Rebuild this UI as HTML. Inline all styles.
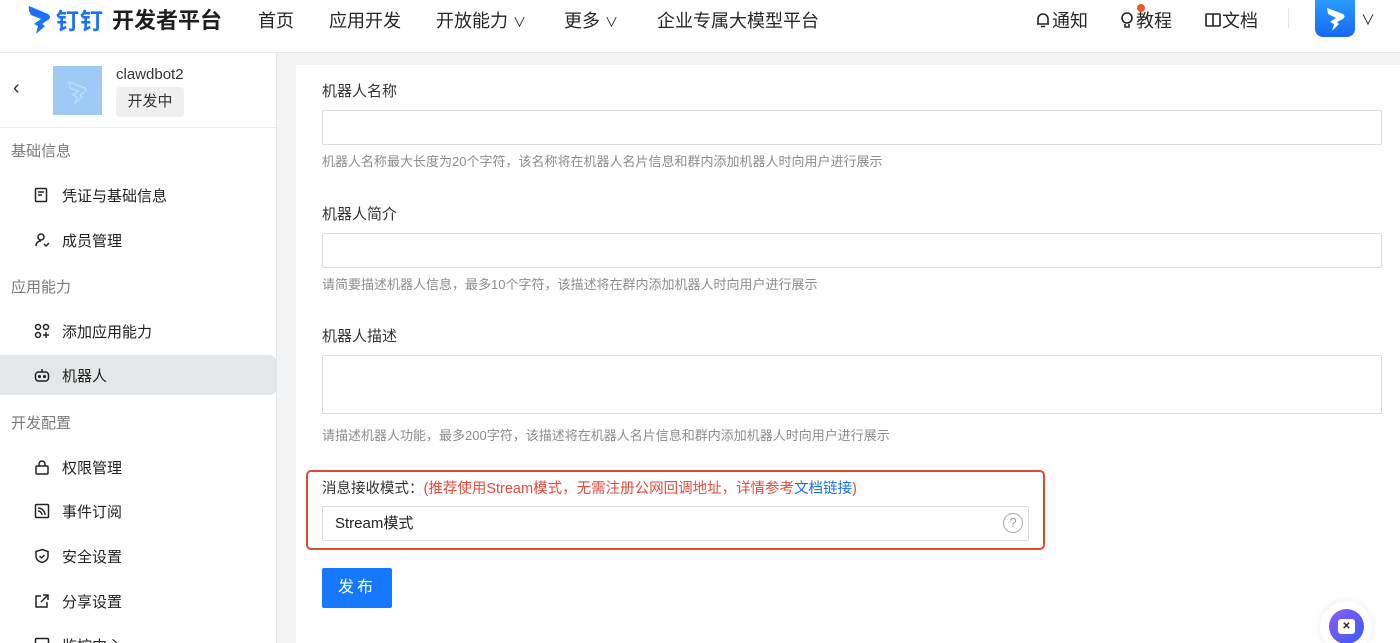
<!DOCTYPE html>
<html style="width:1400px;height:643px;overflow:hidden"><head><meta charset="utf-8">
<style>
*{box-sizing:border-box;margin:0;padding:0}
html,body{width:1400px;height:643px;overflow:hidden}
body{background:#f2f3f5;font-family:"Liberation Sans","Noto Sans CJK SC",sans-serif;color:#1f1f1f;position:relative}
.hdr{position:absolute;left:0;top:0;width:1400px;height:53px;background:#fff;border-bottom:1px solid #e8e8e8}
.logo{position:absolute;left:28px;top:2px;display:flex;align-items:center}
.logo .t1{font-size:23px;font-weight:bold;color:#1a73f5;margin-left:4px;letter-spacing:1px}
.logo .t2{font-size:22px;font-weight:bold;color:#1f1f1f;margin-left:8px}
.nav{position:absolute;top:7px;font-size:18px;color:#262626}
.side{position:absolute;left:0;top:53px;width:277px;height:590px;background:#fff;border-right:1px solid #e6e6e6;overflow:hidden}
.grp{position:absolute;left:11px;font-size:15px;color:#7a7a7a}
.it{position:absolute;left:0;width:277px;height:40px;display:flex;align-items:center;padding-left:34px;font-size:15px;color:#1f1f1f}
.it svg{margin-right:12px}
.main{position:absolute;left:296px;top:65px;width:1104px;height:578px;background:#fff}
.lbl{position:absolute;left:26px;font-size:15px;color:#333}
.inp{position:absolute;left:26px;width:1060px;border:1px solid #dcdcdc;border-radius:2px;background:#fff}
.hint{position:absolute;left:26px;font-size:13px;color:#8c8c8c}
</style></head><body>
<div class="hdr">
 <div class="logo">
  <svg width="24" height="30" viewBox="0 0 24 30"><path d="M1 2 L20 10 Q24 13 20 16 L14 20 L17 22 L8 30 L10 22 L6 20 L13 15 L3 11 Q0 6 1 2Z" fill="#1a73f5"/></svg>
  <span class="t1">钉钉</span><span class="t2">开发者平台</span>
 </div>
 <div class="nav" style="left:258px">首页</div>
 <div class="nav" style="left:329px">应用开发</div>
 <div class="nav" style="left:436px">开放能力 <span style="font-size:13px">∨</span></div>
 <div class="nav" style="left:564px">更多 <span style="font-size:13px">∨</span></div>
 <div class="nav" style="left:657px">企业专属大模型平台</div>
 <div class="nav" style="left:1034px;display:flex;align-items:center"><svg width="18" height="18" viewBox="0 0 18 18" fill="none" stroke="#222" stroke-width="1.6"><path d="M4 13V8a5 5 0 0110 0v5H3h12M7 15.5h4"/></svg>通知</div>
 <div class="nav" style="left:1118px;display:flex;align-items:center"><svg width="18" height="18" viewBox="0 0 18 18" fill="none" stroke="#222" stroke-width="1.6"><circle cx="9" cy="7" r="5"/><path d="M7 13v3h4v-3"/></svg>教程</div>
 <div style="position:absolute;left:1137px;top:4px;width:8px;height:8px;border-radius:50%;background:#f05a28"></div>
 <div class="nav" style="left:1204px;display:flex;align-items:center"><svg width="18" height="18" viewBox="0 0 18 18" fill="none" stroke="#222" stroke-width="1.6"><rect x="2" y="3" width="14" height="12" rx="1"/><path d="M9 3v12"/></svg>文档</div>
 <div style="position:absolute;left:1288px;top:8px;width:1px;height:20px;background:#e5e5e5"></div>
 <div style="position:absolute;left:1315px;top:0;width:40px;height:37px;border-radius:0 0 8px 8px;background:linear-gradient(#2a9bff,#1668f5)"><svg width="40" height="37" viewBox="0 0 40 37"><path d="M12 8 L28 14 Q31 16 28 19 L22 22 L24 24 L17 31 L19 24 L15 22 L21 18 L13 14Z" fill="#fff"/></svg></div>
 <div class="nav" style="left:1361px;top:10px;font-size:14px">∨</div>
</div>

<div class="side">
 <div style="position:absolute;left:13px;top:24px;font-size:20px;color:#333">‹</div>
 <div style="position:absolute;left:53px;top:13px;width:49px;height:49px;background:#9ecbf5"><svg width="49" height="49" viewBox="0 0 49 49"><path d="M16 16 L32 22 Q34 24 32 26 L27 29 L29 31 L22 37 L24 31 L20 29 L25 25 L17 22Z" fill="none" stroke="#c5e0fa" stroke-width="1"/></svg></div>
 <div style="position:absolute;left:116px;top:13px;font-size:15px;color:#333">clawdbot2</div>
 <div style="position:absolute;left:116px;top:34px;width:68px;height:30px;background:#efefef;border-radius:4px;font-size:15px;line-height:30px;text-align:center;color:#333">开发中</div>
 <div style="position:absolute;left:0;top:74px;width:277px;height:1px;background:#ececec"></div>
 <div class="grp" style="top:87px">基础信息</div>
 <div class="it" style="top:122px"><svg width="16" height="16" viewBox="0 0 16 16" fill="none" stroke="#222" stroke-width="1.5"><rect x="1.5" y="1.5" width="11" height="13" rx="1"/><path d="M4 5h6M4 8h4"/></svg>凭证与基础信息</div>
 <div class="it" style="top:167px"><svg width="16" height="16" viewBox="0 0 16 16" fill="none" stroke="#222" stroke-width="1.5"><circle cx="7" cy="5" r="3"/><path d="M2 14c0-4 3-5 5-5M10 12l2 2 3-3"/></svg>成员管理</div>
 <div class="grp" style="top:223px">应用能力</div>
 <div class="it" style="top:258px"><svg width="16" height="16" viewBox="0 0 16 16" fill="none" stroke="#222" stroke-width="1.5"><circle cx="4" cy="4" r="2.5"/><circle cx="12" cy="4" r="2.5"/><circle cx="4" cy="12" r="2.5"/><path d="M12 9v6M9 12h6"/></svg>添加应用能力</div>
 <div class="it" style="top:302px;background:#e5e6e7;border-radius:0 8px 8px 0"><svg width="16" height="16" viewBox="0 0 16 16" fill="none" stroke="#222" stroke-width="1.5"><rect x="1.5" y="5" width="13" height="9" rx="3"/><path d="M8 5V2"/><circle cx="5.5" cy="9.5" r=".8" fill="#222"/><circle cx="10.5" cy="9.5" r=".8" fill="#222"/></svg>机器人</div>
 <div class="grp" style="top:359px">开发配置</div>
 <div class="it" style="top:394px"><svg width="16" height="16" viewBox="0 0 16 16" fill="none" stroke="#222" stroke-width="1.5"><rect x="2" y="7" width="12" height="8" rx="1"/><path d="M5 7V5a3 3 0 016 0v2"/></svg>权限管理</div>
 <div class="it" style="top:438px"><svg width="16" height="16" viewBox="0 0 16 16" fill="none" stroke="#222" stroke-width="1.5"><rect x="1.5" y="1.5" width="13" height="13" rx="1"/><path d="M4 5a7 7 0 017 7M4 8a4 4 0 014 4"/></svg>事件订阅</div>
 <div class="it" style="top:483px"><svg width="16" height="16" viewBox="0 0 16 16" fill="none" stroke="#222" stroke-width="1.5"><path d="M8 1.5l6 2v5c0 3-3 5-6 6-3-1-6-3-6-6v-5z"/><path d="M5.5 8l2 2 3-3"/></svg>安全设置</div>
 <div class="it" style="top:528px"><svg width="16" height="16" viewBox="0 0 16 16" fill="none" stroke="#222" stroke-width="1.5"><path d="M13 9v5H2V3h5M9 2h5v5M14 2L7 9"/></svg>分享设置</div>
 <div class="it" style="top:572px"><svg width="16" height="16" viewBox="0 0 16 16" fill="none" stroke="#222" stroke-width="1.5"><rect x="1.5" y="1.5" width="13" height="13" rx="1"/></svg>监控中心</div>
</div>

<div class="main">
 <div class="lbl" style="top:15px">机器人名称</div>
 <div class="inp" style="top:45px;height:35px"></div>
 <div class="hint" style="top:86px">机器人名称最大长度为20个字符，该名称将在机器人名片信息和群内添加机器人时向用户进行展示</div>
 <div class="lbl" style="top:138px">机器人简介</div>
 <div class="inp" style="top:168px;height:35px"></div>
 <div class="hint" style="top:209px">请简要描述机器人信息，最多10个字符，该描述将在群内添加机器人时向用户进行展示</div>
 <div class="lbl" style="top:260px">机器人描述</div>
 <div class="inp" style="top:290px;height:59px"></div>
 <div class="hint" style="top:360px">请描述机器人功能，最多200字符，该描述将在机器人名片信息和群内添加机器人时向用户进行展示</div>
 <div style="position:absolute;left:10px;top:405px;width:739px;height:80px;border:2px solid #e4482f;border-radius:5px"></div>
 <div style="position:absolute;left:26px;top:412px;font-size:14.5px;color:#333">消息接收模式：<span style="color:#e84a3b">(推荐使用Stream模式，无需注册公网回调地址，详情参考<span style="color:#1a73e8">文档链接</span>)</span></div>
 <div class="inp" style="top:441px;width:707px;height:35px;font-size:15px;line-height:33px;padding-left:12px;color:#222">Stream模式
  <div style="position:absolute;right:5px;top:6px;width:20px;height:20px;border:1.5px solid #aaa;border-radius:50%;font-size:13px;line-height:17px;text-align:center;color:#999;padding:0">?</div></div>
 <div style="position:absolute;left:26px;top:503px;width:70px;height:40px;background:#1677ff;border-radius:2px;color:#fff;font-size:16px;line-height:40px;text-align:center;letter-spacing:3px">发布</div>
 <div style="position:absolute;left:1024px;top:536px;width:52px;height:52px;border-radius:50%;background:#fff;box-shadow:0 0 8px rgba(0,0,0,.08)"><div style="position:absolute;left:9px;top:8px;width:35px;height:35px;border-radius:50%;background:linear-gradient(135deg,#8a5cf6,#3b5bf0)"><div style="position:absolute;left:9px;top:10px;width:17px;height:15px;border-radius:3px;background:#fff;font-size:10px;line-height:15px;text-align:center;font-weight:bold;color:#222">✕</div></div></div>
</div>
</body></html>
